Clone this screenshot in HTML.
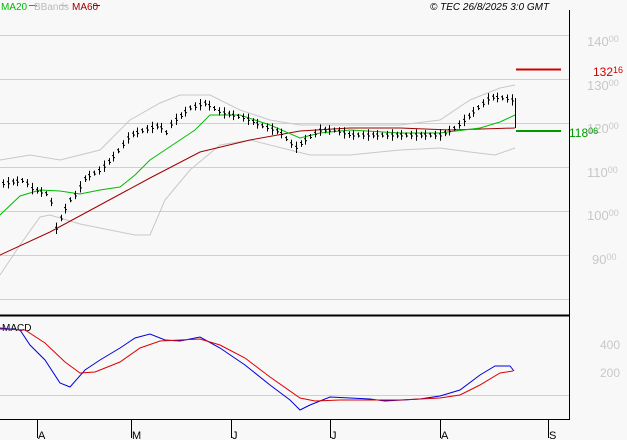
<!DOCTYPE html>
<html><head><meta charset="utf-8"><style>
html,body{margin:0;padding:0;background:#f8f8f8;width:627px;height:440px;overflow:hidden}
svg{display:block;font-family:"Liberation Sans",sans-serif}
</style></head><body>
<svg width="627" height="440" viewBox="0 0 627 440">
<rect width="627" height="440" fill="#f8f8f8"/>
<g stroke="#cfcfcf" stroke-width="1">
<line x1="0" y1="35.5" x2="569" y2="35.5"/>
<line x1="0" y1="79.5" x2="569" y2="79.5"/>
<line x1="0" y1="123.5" x2="569" y2="123.5"/>
<line x1="0" y1="167.5" x2="569" y2="167.5"/>
<line x1="0" y1="211.5" x2="569" y2="211.5"/>
<line x1="0" y1="255.5" x2="569" y2="255.5"/>
<line x1="0" y1="299.5" x2="569" y2="299.5"/>
<line x1="0" y1="395.5" x2="569" y2="395.5"/>
</g>
<g fill="#c8c8c8" font-size="13">
<text x="587" y="46">140<tspan font-size="9" dy="-4">00</tspan></text>
<text x="587" y="90">130<tspan font-size="9" dy="-4">00</tspan></text>
<text x="587" y="133">120<tspan font-size="9" dy="-4">00</tspan></text>
<text x="587" y="177">110<tspan font-size="9" dy="-4">00</tspan></text>
<text x="587" y="220">100<tspan font-size="9" dy="-4">00</tspan></text>
<text x="592" y="264">90<tspan font-size="9" dy="-4">00</tspan></text>
<text x="600" y="349" font-size="12">400</text>
<text x="600" y="377" font-size="12">200</text>
</g>
<polyline fill="none" stroke="#c8c8c8" points="0,160 30,155 60,160 100,150 130,120 160,103 180,95 210,95 240,110 270,120 300,125 330,125 400,125 440,120 470,100 500,88 515,85"/>
<polyline fill="none" stroke="#c8c8c8" points="0,275 20,245 40,217 50,215 80,224 110,230 135,235 150,235 165,200 190,170 220,145 250,140 290,150 310,155 350,155 400,150 440,148 470,152 495,155 515,148"/>
<polyline fill="none" stroke="#a00000" points="0,255 50,232 100,205 150,178 200,152 250,140 300,131 350,128 400,128 450,130 515,128"/>
<polyline fill="none" stroke="#00bb00" points="0,215 20,196 40,190 60,191 80,194 100,190 120,187 135,175 150,160 165,150 180,140 195,130 210,115 240,115 270,125 300,138 320,133 350,130 400,133 440,133 480,128 500,122 515,115"/>
<g id="bars" stroke="#000" stroke-width="1"></g>
<line x1="516" y1="69.5" x2="561" y2="69.5" stroke="#d00000" stroke-width="2"/>
<line x1="516" y1="131" x2="561" y2="131" stroke="#009900" stroke-width="2"/>
<text x="593" y="76" fill="#d00000" font-size="12">132<tspan font-size="9" dy="-3">16</tspan></text>
<text x="569" y="137" fill="#009900" font-size="12">118<tspan font-size="9" dy="-3">06</tspan></text>
<text x="1" y="10" font-size="10" fill="#00bb00">MA20</text>
<line x1="29" y1="5.5" x2="37" y2="5.5" stroke="#00bb00"/>
<text x="34" y="10" font-size="10" fill="#bbb">BBands</text>
<line x1="60" y1="5.5" x2="67" y2="5.5" stroke="#bbb"/>
<text x="72" y="10" font-size="10" fill="#a00000">MA60</text>
<line x1="93" y1="5.5" x2="100" y2="5.5" stroke="#a00000"/>
<text x="430" y="10" font-size="10" font-style="italic" fill="#000">© TEC 26/8/2025 3:0 GMT</text>
<line x1="569.5" y1="10" x2="569.5" y2="420" stroke="#000"/>
<line x1="0" y1="315.5" x2="569" y2="315.5" stroke="#000" stroke-width="2"/>
<line x1="0" y1="419.5" x2="569" y2="419.5" stroke="#000"/>
<text x="2" y="331" font-size="10" fill="#000">MACD</text>
<polyline fill="none" stroke="#0000dd" points="0,328 20,330 30,345 45,360 60,383 70,387 85,370 100,360 120,348 135,338 150,334 165,340 180,341 200,337 220,348 245,365 270,385 290,400 300,410 310,405 330,397 370,399 385,401 420,399 440,396 460,390 480,375 495,366 510,366 514,371"/>
<polyline fill="none" stroke="#dd0000" points="0,329 25,330 45,343 65,362 80,373 95,372 120,362 140,348 160,341 200,339 220,345 245,358 270,377 300,398 315,401 340,400 400,400 440,398 460,395 480,385 500,373 513,371"/>
<g stroke="#000"><line x1="37.5" y1="420" x2="37.5" y2="438"/><line x1="131.5" y1="420" x2="131.5" y2="438"/><line x1="231.5" y1="420" x2="231.5" y2="438"/><line x1="330.5" y1="420" x2="330.5" y2="438"/><line x1="440.5" y1="420" x2="440.5" y2="438"/><line x1="548.5" y1="420" x2="548.5" y2="438"/></g>
<g font-size="11" fill="#000"><text x="38" y="439">A</text><text x="132" y="439">M</text><text x="232" y="439">J</text><text x="331" y="439">J</text><text x="441" y="439">A</text><text x="549" y="439">S</text></g>
</svg>
<script>
var p=[[0,184],[25,180],[30,188],[50,195],[55,230],[62,215],[70,200],[75,195],[85,178],[100,170],[115,155],[130,135],[150,128],[160,125],[165,135],[170,125],[175,120],[190,108],[205,103],[220,112],[245,118],[260,125],[280,132],[295,148],[305,140],[320,130],[335,130],[350,135],[380,135],[410,135],[440,135],[455,128],[470,115],[490,97],[505,98],[512,100]];
function f(x){for(var i=0;i<p.length-1;i++){if(x<=p[i+1][0]){var t=(x-p[i][0])/(p[i+1][0]-p[i][0]);return p[i][1]+t*(p[i+1][1]-p[i][1]);}}return p[p.length-1][1];}
var s='';var k=0;for(var x=3;x<=512;x+=4.8){k++;var y=f(x),xx=Math.round(x)+.5,h=2.5+((k*7)%5)*0.8;s+='<line x1="'+xx+'" y1="'+(y-h)+'" x2="'+xx+'" y2="'+(y+h)+'"/><line x1="'+(xx-1.5)+'" y1="'+(y-1)+'" x2="'+xx+'" y2="'+(y-1)+'"/><line x1="'+xx+'" y1="'+(y+1)+'" x2="'+(xx+1.5)+'" y2="'+(y+1)+'"/>';}
s+='<line x1="515.5" y1="98" x2="515.5" y2="128"/>';
document.getElementById('bars').innerHTML=s;
</script>
</body></html>
